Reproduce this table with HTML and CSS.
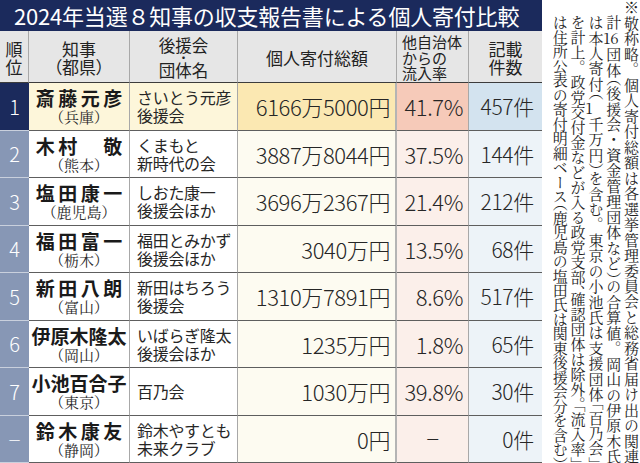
FILE: index.html
```html
<!DOCTYPE html>
<html lang="ja">
<head>
<meta charset="utf-8">
<title>2024年当選８知事の収支報告書による個人寄付比較</title>
<link rel="stylesheet" href="styles.css">
</head>
<body>
<div class="page">
  <div class="main">
    <div class="title">2024年当選８知事の収支報告書による個人寄付比較</div>
    <div class="grid">
      <div class="row hd">
        <div class="c h-rank"><div class="in">順<br>位</div></div>
        <div class="c h-gov"><div class="in">知事<br><span class="paren">（都県）</span></div></div>
        <div class="c h-org"><div class="in"><div>後援会</div><div class="dot">・</div><div>団体名</div></div></div>
        <div class="c h-amt"><div class="in">個人寄付総額</div></div>
        <div class="c h-rate"><div class="in">他自治体<br>からの<br>流入率</div></div>
        <div class="c h-cnt"><div class="in">記載<br>件数</div></div>
      </div>

      <div class="row r1">
        <div class="c rank">1</div>
        <div class="c gov"><span class="name sp">斎藤元彦</span><span class="pref">（兵庫）</span></div>
        <div class="c org"><div class="in">さいとう元彦<br>後援会</div></div>
        <div class="c amt">6166万5000円</div>
        <div class="c rate">41.7%</div>
        <div class="c cnt">457件</div>
      </div>

      <div class="row">
        <div class="c rank">2</div>
        <div class="c gov"><span class="name sp">木村　敬</span><span class="pref">（熊本）</span></div>
        <div class="c org"><div class="in">くまもと<br>新時代の会</div></div>
        <div class="c amt">3887万8044円</div>
        <div class="c rate">37.5%</div>
        <div class="c cnt">144件</div>
      </div>

      <div class="row">
        <div class="c rank">3</div>
        <div class="c gov"><span class="name sp">塩田康一</span><span class="pref">（鹿児島）</span></div>
        <div class="c org"><div class="in">しおた康一<br>後援会ほか</div></div>
        <div class="c amt">3696万2367円</div>
        <div class="c rate">21.4%</div>
        <div class="c cnt">212件</div>
      </div>

      <div class="row">
        <div class="c rank">4</div>
        <div class="c gov"><span class="name sp">福田富一</span><span class="pref">（栃木）</span></div>
        <div class="c org"><div class="in">福田とみかず<br>後援会ほか</div></div>
        <div class="c amt">3040万円</div>
        <div class="c rate">13.5%</div>
        <div class="c cnt">68件</div>
      </div>

      <div class="row">
        <div class="c rank">5</div>
        <div class="c gov"><span class="name sp">新田八朗</span><span class="pref">（富山）</span></div>
        <div class="c org"><div class="in">新田はちろう<br>後援会</div></div>
        <div class="c amt">1310万7891円</div>
        <div class="c rate">8.6%</div>
        <div class="c cnt">517件</div>
      </div>

      <div class="row">
        <div class="c rank">6</div>
        <div class="c gov"><span class="name">伊原木隆太</span><span class="pref">（岡山）</span></div>
        <div class="c org"><div class="in">いばらぎ隆太<br>後援会ほか</div></div>
        <div class="c amt">1235万円</div>
        <div class="c rate">1.8%</div>
        <div class="c cnt">65件</div>
      </div>

      <div class="row">
        <div class="c rank">7</div>
        <div class="c gov"><span class="name">小池百合子</span><span class="pref">（東京）</span></div>
        <div class="c org"><div class="in">百乃会</div></div>
        <div class="c amt">1030万円</div>
        <div class="c rate">39.8%</div>
        <div class="c cnt">30件</div>
      </div>

      <div class="row">
        <div class="c rank dash">－</div>
        <div class="c gov"><span class="name sp">鈴木康友</span><span class="pref">（静岡）</span></div>
        <div class="c org"><div class="in">鈴木やすとも<br>未来クラブ</div></div>
        <div class="c amt">0円</div>
        <div class="c rate none">－</div>
        <div class="c cnt">0件</div>
      </div>
    </div>
  </div>

  <div class="note">※敬称略。個人寄付総額は各選挙管理委員会と総務省届け出の関連<br>計<span class="tcy">16</span>団体<span class="hw">（</span>後援会・資金管理団体など<span class="hw">）</span>の合算値。岡山の伊原木氏<br>は本人寄付<span class="hw">（</span><span class="tcy">1</span>千万円<span class="hw">）</span>を含む。東京の小池氏は支援団体<span class="hw">「</span>百乃会<span class="hw">」</span><br>を計上。政党交付金などが入る政党支部<span class="hw">、</span>確認団体は除外<span class="hw">。「</span>流入率<span class="hw">」</span><br>は住所公表の寄付明細ベース<span class="hw">（</span>鹿児島の塩田氏は関東後援会分を含む<span class="hw">）</span></div>
</div>
</body>
</html>
```

FILE: styles.css
```css
html, body {
  margin: 0;
  padding: 0;
}

body {
  width: 640px;
  height: 463px;
  overflow: hidden;
  background: #ffffff;
  color: #262626;
  font-family: "Noto Sans CJK JP", "Noto Sans", sans-serif;
}

.page {
  display: flex;
  height: 463px;
}

.main {
  width: 542px;
  display: flex;
  flex-direction: column;
}

.title {
  height: 31px;
  background: #1b2a5c;
  color: #ffffff;
  font-size: 22px;
  line-height: 31px;
  padding-left: 14px;
  white-space: nowrap;
  letter-spacing: -0.2px;
}

.grid {
  display: grid;
  grid-template-columns: 29px 101px 108px 159px 72px 73px;
  grid-template-rows: 52px repeat(8, 47.5px);
}

.row {
  display: contents;
}

.c {
  box-sizing: border-box;
  border-right: 1px solid #a8a8a8;
  border-bottom: 1px solid #5e5e5e;
  display: flex;
  align-items: center;
  white-space: nowrap;
  overflow: hidden;
}

/* header */
.hd .c {
  background: #e6e6e6;
  justify-content: center;
  text-align: center;
  font-size: 17px;
  line-height: 18px;
  color: #222222;
  border-bottom-color: #3c3c3c;
  padding-top: 2px;
}

.hd .paren {
  font-feature-settings: "palt";
}

.hd .h-org {
  font-size: 16.5px;
  line-height: 17px;
}

.hd .h-org .dot {
  height: 8px;
  line-height: 8px;
  font-size: 12px;
}

.hd .h-rate {
  font-size: 15px;
  line-height: 15.5px;
  text-align: left;
  justify-content: flex-start;
  padding-left: 5px;
}

.hd .h-cnt {
  border-right: none;
}

/* body cells */
.rank {
  background: #8797b5;
  color: #ffffff;
  justify-content: center;
  font-size: 20px;
  font-weight: 300;
  border-right: none;
  border-bottom-color: #c9d0dd;
}

.rank.dash {
  font-size: 14px;
}

.r1 .rank {
  background: #1b2a5c;
}

.gov {
  flex-direction: column;
  justify-content: center;
  padding-top: 1px;
}

.name {
  font-weight: 700;
  font-size: 19px;
  line-height: 20px;
  color: #1a1a1a;
}

.name.sp {
  letter-spacing: 3.5px;
  margin-right: -3.5px;
}

.pref {
  font-family: "Noto Serif CJK JP", "Noto Sans CJK JP", serif;
  font-size: 15px;
  line-height: 17px;
  font-feature-settings: "palt";
  color: #2a2a2a;
}

.org {
  padding-left: 7px;
  font-size: 16px;
  line-height: 18px;
  letter-spacing: -0.3px;
}

.amt {
  justify-content: flex-end;
  padding-right: 5px;
  font-size: 22px;
  font-weight: 300;
  letter-spacing: -0.4px;
  background: #fdfbf1;
  border-right: 2px solid #b4b4b4;
}

.rate {
  justify-content: flex-end;
  padding-right: 5px;
  font-size: 22px;
  font-weight: 300;
  letter-spacing: -0.4px;
  background: #fbefea;
}

.rate.none {
  justify-content: center;
  padding-right: 0;
  font-size: 15px;
  font-weight: 400;
}

.cnt {
  justify-content: flex-end;
  padding-right: 8px;
  font-size: 21px;
  font-weight: 300;
  letter-spacing: -0.3px;
  background: #edf3f8;
  border-right: none;
}

.r1 .gov,
.r1 .org {
  background: #fdf6da;
}

.r1 .amt {
  background: #fbe8b2;
}

.r1 .rate {
  background: #f6cab9;
}

.r1 .cnt {
  background: #d3e3ef;
}

/* vertical note */
.note {
  margin-left: auto;
  width: 89px;
  height: 463px;
  box-sizing: border-box;
  writing-mode: vertical-rl;
  font-family: "Noto Serif CJK JP", "Noto Sans CJK JP", serif;
  font-size: 15px;
  line-height: 17.8px;
  letter-spacing: -1.2px;
  color: #222222;
  white-space: nowrap;
  text-align: justify;
  text-align-last: justify;
  text-justify: inter-character;
  padding-top: 15px;
  text-indent: -15px;
  overflow: hidden;
}

.note .tcy {
  text-combine-upright: all;
}

.note .hw {
  font-feature-settings: "vhal" 1;
}
```
